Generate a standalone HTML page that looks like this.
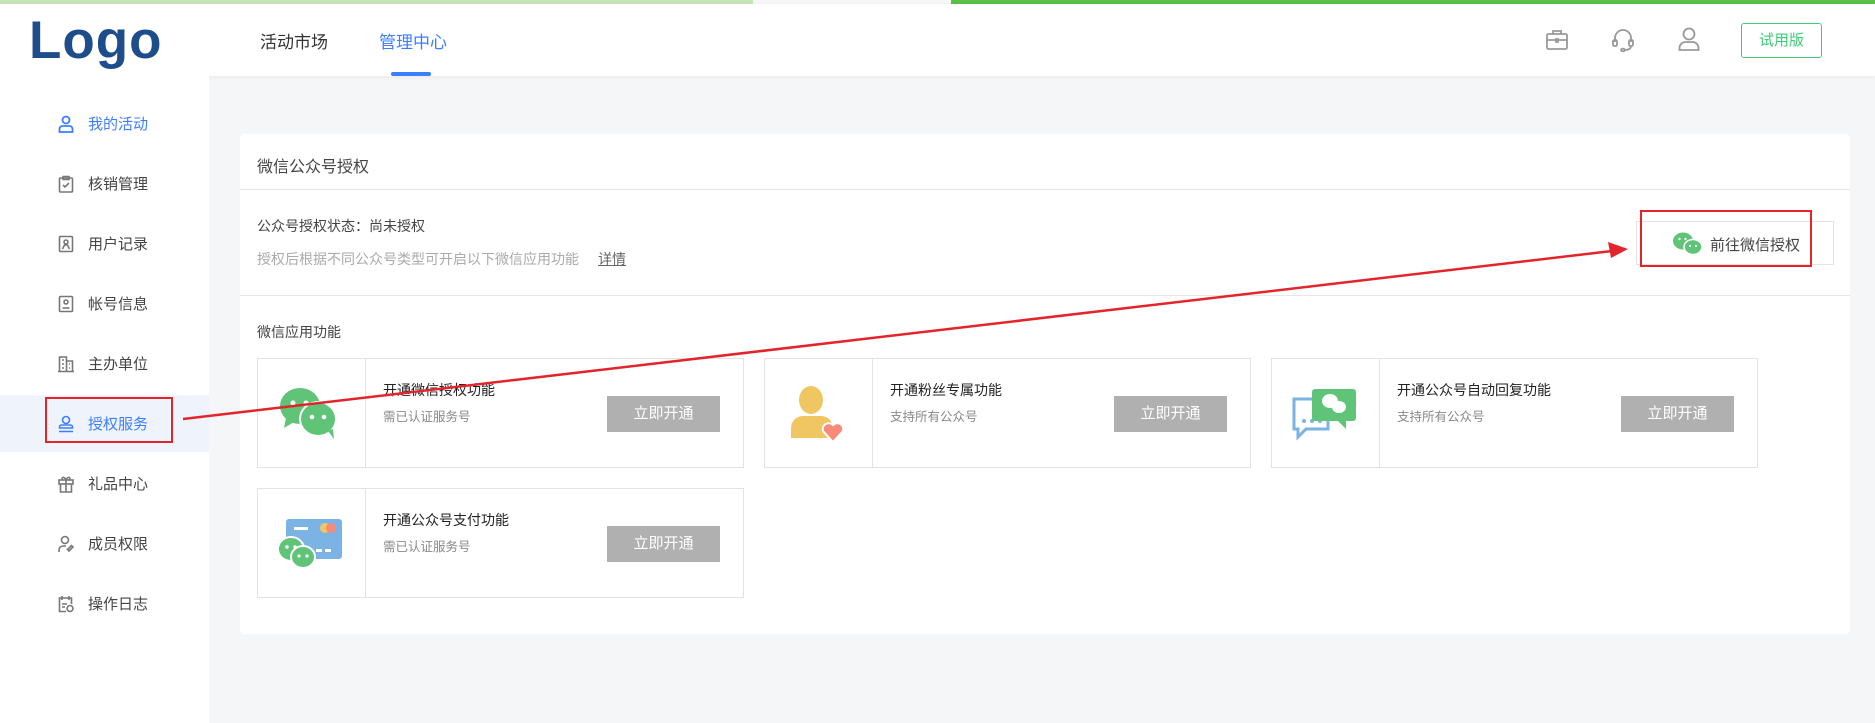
<!DOCTYPE html>
<html><head><meta charset="utf-8"><style>
*{margin:0;padding:0;box-sizing:border-box}
body{width:1875px;height:723px;overflow:hidden;background:#f5f6f8;font-family:"Liberation Sans","Noto Sans CJK SC",sans-serif;position:relative;color:#333}
.abs{position:absolute}
.hdr{left:0;top:0;width:1875px;height:76px;background:#fff;box-shadow:0 1px 4px rgba(0,0,0,.06)}
.side{left:0;top:76px;width:209px;height:647px;background:#fff}
.item{position:absolute;left:0;width:209px;height:57px;display:flex;align-items:center;font-size:15px;color:#444}
.item svg{position:absolute;left:58px}
.item span{position:absolute;left:88px}
.card{left:240px;top:134px;width:1610px;height:500px;background:#fff;border-radius:5px}
.fc{position:absolute;width:487px;height:110px;border:1px solid #e3e3e3;background:#fff}
.fc .ic{position:absolute;left:0;top:0;width:108px;height:100%;border-right:1px solid #e3e3e3}
.fc .t{position:absolute;left:125px;top:21px;font-size:14px;color:#222}
.fc .s{position:absolute;left:125px;top:47px;font-size:12.5px;color:#888}
.fc .b{position:absolute;left:349px;top:37px;width:113px;height:36px;background:#b0b0b0;color:#fff;font-size:15px;text-align:center;line-height:36px}
</style></head><body>
<div class="abs" style="left:0;top:0;width:753px;height:4px;background:#c5e5b8"></div>
<div class="abs" style="left:951px;top:0;width:924px;height:4px;background:#5dbf45"></div>
<div class="abs hdr" style="top:4px;height:72px"></div>
<div class="abs" style="left:29px;top:10px;font-size:53px;font-weight:bold;color:#1e4d8c;letter-spacing:1px">Logo</div>
<div class="abs" style="left:260px;top:28px;font-size:17px;color:#333">活动市场</div>
<div class="abs" style="left:379px;top:28px;font-size:17px;color:#3d7eff">管理中心</div>
<div class="abs" style="left:391px;top:72px;width:40px;height:4px;background:#3d7eff;border-radius:2px"></div>
<svg class="abs" style="left:1545px;top:28px" width="24" height="24" viewBox="0 0 24 24" fill="none" stroke="#999" stroke-width="1.8"><rect x="2" y="6" width="20" height="15" rx="1.5"/><path d="M8 6V3h8v3M2 12h20M11 11h2v3h-2z"/></svg>
<svg class="abs" style="left:1611px;top:27px" width="24" height="26" viewBox="0 0 24 26" fill="none" stroke="#999" stroke-width="1.8"><path d="M4 15v-4a8 8 0 0116 0v4"/><rect x="2" y="13" width="4" height="6" rx="1.5"/><rect x="18" y="13" width="4" height="6" rx="1.5"/><path d="M20 19c0 3-3 4-7 4"/><ellipse cx="12" cy="23" rx="2" ry="1.3"/></svg>
<svg class="abs" style="left:1678px;top:27px" width="22" height="24" viewBox="0 0 22 24" fill="none" stroke="#999" stroke-width="1.8"><circle cx="11" cy="7" r="5.5"/><path d="M1.5 23v-2a6 6 0 016-6h7a6 6 0 016 6v2z"/></svg>
<div class="abs" style="left:1741px;top:23px;width:81px;height:35px;border:1px solid #3bcf75;border-radius:3px;color:#3bcf75;font-size:15px;text-align:center;line-height:33px">试用版</div>

<div class="abs side"></div>
<div class="item" style="top:95px;color:#3d7eff"><svg width="16" height="18" viewBox="0 0 16 18" fill="none" stroke="#3d7eff" stroke-width="1.8"><circle cx="8" cy="5" r="3.5"/><path d="M1.5 17v-3a3 3 0 013-3h7a3 3 0 013 3v3z"/></svg><span>我的活动</span></div>
<div class="item" style="top:155px"><svg width="16" height="18" viewBox="0 0 16 18" fill="none" stroke="#777" stroke-width="1.6"><rect x="1.5" y="3" width="13" height="14" rx="1"/><path d="M5 1.5h6v3H5zM5 10l2 2 4-4"/></svg><span>核销管理</span></div>
<div class="item" style="top:215px"><svg width="16" height="18" viewBox="0 0 16 18" fill="none" stroke="#777" stroke-width="1.6"><rect x="1.5" y="1.5" width="13" height="15" rx="1"/><circle cx="8" cy="7" r="2"/><path d="M4.5 14l2-4h3l2 4"/></svg><span>用户记录</span></div>
<div class="item" style="top:275px"><svg width="16" height="18" viewBox="0 0 16 18" fill="none" stroke="#777" stroke-width="1.6"><rect x="1.5" y="1.5" width="13" height="15" rx="1"/><circle cx="8" cy="7" r="2"/><path d="M4.5 13h7"/></svg><span>帐号信息</span></div>
<div class="item" style="top:335px"><svg width="16" height="18" viewBox="0 0 16 18" fill="none" stroke="#777" stroke-width="1.6"><path d="M1.5 16.5V2h7v14.5M8.5 6h6v10.5M0 16.5h16M4 5h2M4 9h2M4 13h2M11 9h1M11 13h1"/></svg><span>主办单位</span></div>
<div class="abs" style="left:0;top:395px;width:209px;height:57px;background:#eef3fc"></div>
<div class="item" style="top:395px;color:#3d7eff"><svg width="16" height="18" viewBox="0 0 16 18" fill="none" stroke="#3d7eff" stroke-width="1.6"><circle cx="8" cy="5" r="3.5"/><path d="M1.5 13v-1a2 2 0 012-2h9a2 2 0 012 2v1zM1 16.5h14"/></svg><span>授权服务</span></div>
<div class="abs" style="left:45px;top:397px;width:128px;height:46px;border:2px solid #e3242b"></div>
<div class="item" style="top:455px"><svg width="16" height="18" viewBox="0 0 16 18" fill="none" stroke="#777" stroke-width="1.6"><rect x="1" y="5" width="14" height="4"/><path d="M2.5 9v8h11V9M8 5v12M8 5C6 1 3 2 4.5 5M8 5c2-4 5-3 3.5 0"/></svg><span>礼品中心</span></div>
<div class="item" style="top:515px"><svg width="16" height="18" viewBox="0 0 16 18" fill="none" stroke="#777" stroke-width="1.6"><circle cx="7" cy="5" r="3.5"/><path d="M1 17v-2a4 4 0 014-4h3M11 16l4-4-1.5-1.5-4 4z"/></svg><span>成员权限</span></div>
<div class="item" style="top:575px"><svg width="16" height="18" viewBox="0 0 16 18" fill="none" stroke="#777" stroke-width="1.6"><path d="M8 16.5H1.5V3h12v6M4 1v4M11 1v4M4 9h5M4 12h3"/><circle cx="12" cy="13.5" r="3"/></svg><span>操作日志</span></div>

<div class="abs card"></div>
<div class="abs" style="left:257px;top:153px;font-size:16px;color:#444">微信公众号授权</div>
<div class="abs" style="left:240px;top:189px;width:1610px;height:1px;background:#e6e6e6"></div>
<div class="abs" style="left:257px;top:216px;font-size:14px;color:#444">公众号授权状态：尚未授权</div>
<div class="abs" style="left:257px;top:249px;font-size:14px;color:#aaa">授权后根据不同公众号类型可开启以下微信应用功能</div>
<div class="abs" style="left:598px;top:249px;font-size:14px;color:#666;text-decoration:underline">详情</div>
<div class="abs" style="left:1636px;top:221px;width:198px;height:44px;border:1px solid #e3e3e3"></div>
<svg class="abs" style="left:1672px;top:231px" width="32" height="26" viewBox="0 0 32 26"><ellipse cx="11" cy="10" rx="10" ry="8.5" fill="#5fc477"/><ellipse cx="21" cy="16" rx="9" ry="7.5" fill="#5fc477" stroke="#fff" stroke-width="1.5"/><circle cx="7.5" cy="8" r="1.2" fill="#fff"/><circle cx="13.5" cy="8" r="1.2" fill="#fff"/><circle cx="18" cy="15" r="1.1" fill="#fff"/><circle cx="24" cy="15" r="1.1" fill="#fff"/></svg>
<div class="abs" style="left:1710px;top:234px;font-size:15px;color:#444">前往微信授权</div>
<div class="abs" style="left:1640px;top:210px;width:172px;height:57px;border:2px solid #e3242b"></div>
<div class="abs" style="left:240px;top:295px;width:1610px;height:1px;background:#e6e6e6"></div>
<div class="abs" style="left:257px;top:322px;font-size:14px;color:#444">微信应用功能</div>

<div class="fc" style="left:257px;top:358px"><div class="ic"><svg style="position:absolute;left:20px;top:27px" width="66" height="56" viewBox="0 0 66 56"><ellipse cx="22" cy="20" rx="20" ry="18" fill="#5fc477"/><path d="M8 32l-2 10 10-6z" fill="#5fc477"/><ellipse cx="40" cy="33" rx="18" ry="17" fill="#5fc477" stroke="#fff" stroke-width="2"/><path d="M50 45l6 8-1-10z" fill="#5fc477"/><circle cx="15" cy="17" r="2.5" fill="#fff"/><circle cx="28" cy="17" r="2.5" fill="#fff"/><circle cx="34" cy="31" r="2.3" fill="#fff"/><circle cx="46" cy="31" r="2.3" fill="#fff"/></svg></div><div class="t">开通微信授权功能</div><div class="s">需已认证服务号</div><div class="b">立即开通</div></div>
<div class="fc" style="left:764px;top:358px"><div class="ic"><svg style="position:absolute;left:24px;top:27px" width="60" height="60" viewBox="0 0 60 60"><ellipse cx="22" cy="14" rx="12" ry="14" fill="#f0c662"/><path d="M2 52V42a12 12 0 0112-12h18a12 12 0 0112 12v10z" fill="#f0c662"/><path d="M44 56l-10-11a6 6 0 0110-6 6 6 0 0110 6z" fill="#f78b78" stroke="#fff" stroke-width="2"/></svg></div><div class="t">开通粉丝专属功能</div><div class="s">支持所有公众号</div><div class="b">立即开通</div></div>
<div class="fc" style="left:1271px;top:358px"><div class="ic"><svg style="position:absolute;left:20px;top:28px" width="68" height="56" viewBox="0 0 68 56"><path d="M2 12h34v30H14l-8 8v-8H2z" fill="#fff" stroke="#7ab3e4" stroke-width="3"/><circle cx="12" cy="34" r="2" fill="#7ab3e4"/><circle cx="20" cy="34" r="2" fill="#7ab3e4"/><circle cx="28" cy="34" r="2" fill="#7ab3e4"/><rect x="20" y="2" width="44" height="32" rx="3" fill="#5fc477"/><path d="M54 34v8l-8-8z" fill="#5fc477"/><ellipse cx="38" cy="14" rx="8" ry="7" fill="#fff"/><ellipse cx="47" cy="20" rx="7" ry="6" fill="#fff"/></svg></div><div class="t">开通公众号自动回复功能</div><div class="s">支持所有公众号</div><div class="b">立即开通</div></div>
<div class="fc" style="left:257px;top:488px"><div class="ic"><svg style="position:absolute;left:18px;top:28px" width="70" height="56" viewBox="0 0 70 56"><rect x="10" y="2" width="56" height="40" rx="3" fill="#7ab3e4"/><rect x="18" y="10" width="14" height="3" fill="#fff"/><circle cx="49" cy="11" r="5" fill="#f0c662"/><circle cx="55" cy="11" r="5" fill="#f78b78"/><rect x="40" y="32" width="6" height="3" fill="#fff"/><rect x="49" y="32" width="6" height="3" fill="#fff"/><ellipse cx="15" cy="32" rx="13" ry="12" fill="#5fc477" stroke="#fff" stroke-width="2"/><ellipse cx="27" cy="40" rx="12" ry="11" fill="#5fc477" stroke="#fff" stroke-width="2"/><circle cx="11" cy="30" r="1.7" fill="#fff"/><circle cx="19" cy="30" r="1.7" fill="#fff"/><circle cx="23" cy="39" r="1.6" fill="#fff"/><circle cx="31" cy="39" r="1.6" fill="#fff"/></svg></div><div class="t">开通公众号支付功能</div><div class="s">需已认证服务号</div><div class="b">立即开通</div></div>

<svg class="abs" style="left:0;top:0" width="1875" height="723"><line x1="183" y1="419" x2="1612" y2="251" stroke="#e3242b" stroke-width="2.5"/><path d="M1628 249l-20-7 3 16z" fill="#e3242b"/></svg>
</body></html>
